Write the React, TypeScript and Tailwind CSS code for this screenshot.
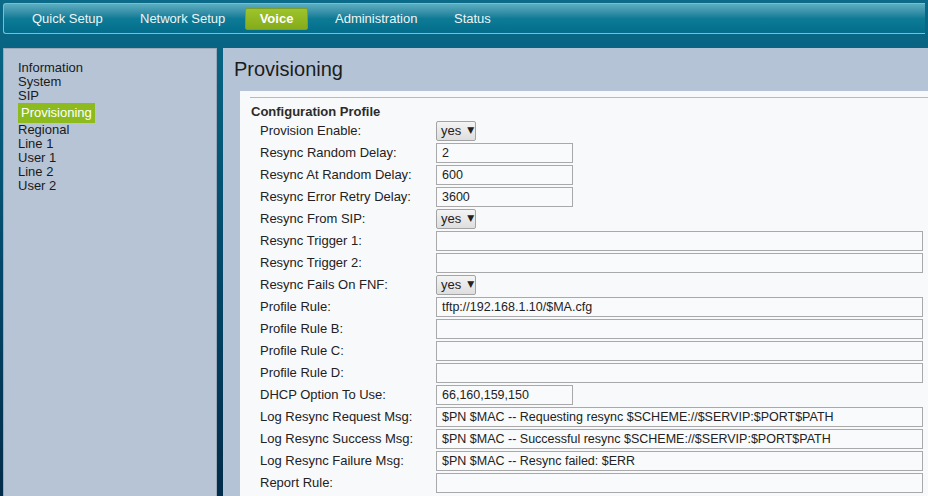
const NAV = [
  { label: "Quick Setup", w: "w-[108px]" },
  { label: "Network Setup", w: "w-[105px]" },
  { label: "Voice", w: "" },
  { label: "Administration", w: "w-[119px]" },
  { label: "Status", w: "w-[60px]" },
];

const MENU = ["Information", "System", "SIP", "Provisioning", "Regional", "Line 1", "User 1", "Line 2", "User 2"];

type Row = { label: string; kind: "select" | "short" | "long"; value?: string };

const ROWS: Row[] = [
  { label: "Provision Enable:", kind: "select", value: "yes" },
  { label: "Resync Random Delay:", kind: "short", value: "2" },
  { label: "Resync At Random Delay:", kind: "short", value: "600" },
  { label: "Resync Error Retry Delay:", kind: "short", value: "3600" },
  { label: "Resync From SIP:", kind: "select", value: "yes" },
  { label: "Resync Trigger 1:", kind: "long" },
  { label: "Resync Trigger 2:", kind: "long" },
  { label: "Resync Fails On FNF:", kind: "select", value: "yes" },
  { label: "Profile Rule:", kind: "long", value: "tftp://192.168.1.10/$MA.cfg" },
  { label: "Profile Rule B:", kind: "long" },
  { label: "Profile Rule C:", kind: "long" },
  { label: "Profile Rule D:", kind: "long" },
  { label: "DHCP Option To Use:", kind: "short", value: "66,160,159,150" },
  { label: "Log Resync Request Msg:", kind: "long", value: "$PN $MAC -- Requesting resync $SCHEME://$SERVIP:$PORT$PATH" },
  { label: "Log Resync Success Msg:", kind: "long", value: "$PN $MAC -- Successful resync $SCHEME://$SERVIP:$PORT$PATH" },
  { label: "Log Resync Failure Msg:", kind: "long", value: "$PN $MAC -- Resync failed: $ERR" },
  { label: "Report Rule:", kind: "long" },
];

function Field({ row }: { row: Row }) {
  if (row.kind === "select") {
    return (
      <div className="flex h-[20px] w-[40px] items-center rounded-[2px] border border-[#a3a3a3] bg-gradient-to-b from-[#f4f4f4] to-[#dedede] pl-[4px] text-[13px] text-[#222]">
        <span>{row.value}</span>
        <span className="ml-[6px] text-[9px]" style={{ fontFamily: '"DejaVu Sans", sans-serif' }}>
          ▼
        </span>
      </div>
    );
  }
  return (
    <div
      className={
        "flex h-[20px] items-center border border-[#a9a9a9] bg-[#f9fafb] pl-[5px] text-[12.5px] text-[#222] whitespace-nowrap " +
        (row.kind === "short" ? "w-[137px]" : "w-[487px]")
      }
    >
      {row.value}
    </div>
  );
}

export default function App() {
  return (
    <div
      className="flex h-[496px] w-[928px] flex-col overflow-hidden bg-gradient-to-b from-[#0a6a88] via-[#034a6c] to-[#022c4a] text-[13px]"
      style={{ fontFamily: '"Liberation Sans", Arial, sans-serif' }}
    >
      <div className="px-[3px] pt-[3px]">
        <div className="flex h-[31px] items-center rounded-l-[3px] border border-r-0 border-[#7fbccc] bg-gradient-to-b from-[#5aadc0] via-[#0e7b96] to-[#026d8c] pl-[28px]">
          {NAV.map((n) =>
            n.label === "Voice" ? (
              <div
                key={n.label}
                className="mr-[27px] flex h-[22px] w-[63px] items-center justify-center rounded-[2px] border border-[#7d9c2a] bg-gradient-to-b from-[#9cc42a] to-[#86ab1b] font-bold text-white"
              >
                {n.label}
              </div>
            ) : (
              <div key={n.label} className={"text-[#eef5f8] " + n.w}>
                {n.label}
              </div>
            )
          )}
        </div>
      </div>

      <div className="mt-[14px] flex flex-1 gap-[6px] pl-[3px]">
        <div className="w-[214px] border border-b-0 border-[#9aa9ba] bg-[#b6c4d6] pl-[14px] pt-[12px]">
          {MENU.map((m) =>
            m === "Provisioning" ? (
              <div key={m} className="inline-block h-[20px] bg-[#8dbb1d] px-[3px] leading-[20px] text-white">
                {m}
              </div>
            ) : (
              <div key={m} className="leading-[14px] text-[#1a1a1a]">
                {m}
              </div>
            )
          )}
        </div>

        <div className="flex flex-1 flex-col bg-[#b4c4d6] pl-[11px]">
          <div className="pt-[9px] text-[20px] leading-[24px] text-[#1c1c1c]">Provisioning</div>
          <div className="ml-[6px] mt-[10px] flex-1 bg-[#f8f9fb] pl-[10px] pt-[6px]">
            <div className="border-t border-[#b3b7dc] pl-[1px] pt-[6px]">
              <div className="text-[13px] font-bold leading-[15px] text-[#2b2b2b]">Configuration Profile</div>
              <div className="pt-[1px]">
                {ROWS.map((r) => (
                  <div key={r.label} className="flex h-[22px] items-center">
                    <div className="w-[185px] pl-[9px] text-[#222]">{r.label}</div>
                    <Field row={r} />
                  </div>
                ))}
              </div>
            </div>
          </div>
        </div>
      </div>
    </div>
  );
}
